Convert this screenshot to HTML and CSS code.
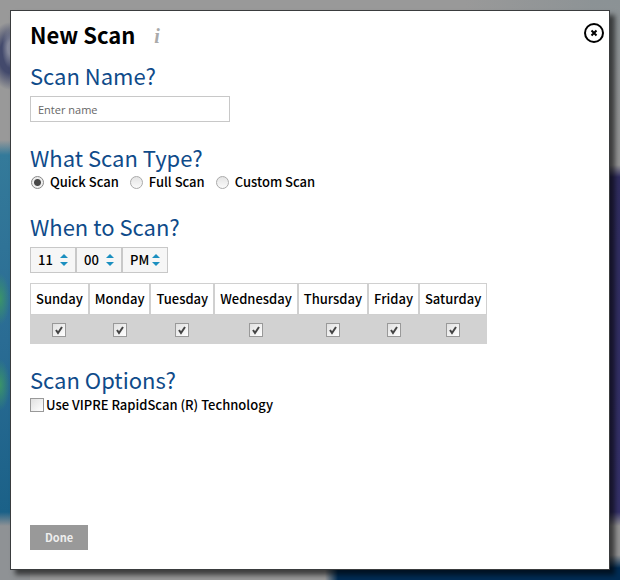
FILE: index.html
```html
<!DOCTYPE html>
<html lang="en">
<head>
<meta charset="utf-8">
<meta name="viewport" content="width=device-width, initial-scale=1">
<title>New Scan</title>
<link rel="stylesheet" href="styles.css">
</head>
<body>
<main class="backdrop">
  <form class="dialog" role="dialog" aria-labelledby="dialog-title">
    <header class="dialog-header">
      <h1 id="dialog-title">New Scan</h1>
      <span class="info">i</span>
      <button class="close" type="button" aria-label="Close">
        <svg width="20" height="20" viewBox="0 0 20 20" fill="none" stroke="#000"><circle cx="10" cy="10" r="9" stroke-width="2"/><path d="M7.500 7.500l5 5M12.500 7.500l-5 5" stroke-width="2"/></svg>
      </button>
    </header>

    <section class="name-section">
      <h2><label for="scan-name">Scan Name?</label></h2>
      <input class="name-input" id="scan-name" type="text" placeholder="Enter name">
    </section>

    <section class="type-section">
      <h2>What Scan Type?</h2>
      <div class="radios">
        <label><input type="radio" name="type" checked>Quick Scan</label>
        <label><input type="radio" name="type">Full Scan</label>
        <label><input type="radio" name="type">Custom Scan</label>
      </div>
    </section>

    <section class="time-section">
      <h2>When to Scan?</h2>
      <div class="time">
        <label class="picker"><select aria-label="Hour"><option>11</option></select><svg class="arrows" width="8" height="12" viewBox="0 0 8 12" fill="#1b8fc0"><path d="M4 0l4 4H0zM0 8h8l-4 4z"/></svg></label>
        <label class="picker"><select aria-label="Minute"><option>00</option></select><svg class="arrows" width="8" height="12" viewBox="0 0 8 12" fill="#1b8fc0"><path d="M4 0l4 4H0zM0 8h8l-4 4z"/></svg></label>
        <label class="picker"><select aria-label="AM or PM"><option>PM</option></select><svg class="arrows" width="8" height="12" viewBox="0 0 8 12" fill="#1b8fc0"><path d="M4 0l4 4H0zM0 8h8l-4 4z"/></svg></label>
      </div>
      <table class="days">
        <thead>
          <tr><th id="sun">Sunday</th><th id="mon">Monday</th><th id="tue">Tuesday</th><th id="wed">Wednesday</th><th id="thu">Thursday</th><th id="fri">Friday</th><th id="sat">Saturday</th></tr>
        </thead>
        <tbody>
          <tr>
            <td><label class="tick"><input type="checkbox" aria-labelledby="sun" checked><svg viewBox="0 0 14 14"><path d="M4 7l2 3 4-6"/></svg></label></td>
            <td><label class="tick"><input type="checkbox" aria-labelledby="mon" checked><svg viewBox="0 0 14 14"><path d="M4 7l2 3 4-6"/></svg></label></td>
            <td><label class="tick"><input type="checkbox" aria-labelledby="tue" checked><svg viewBox="0 0 14 14"><path d="M4 7l2 3 4-6"/></svg></label></td>
            <td><label class="tick"><input type="checkbox" aria-labelledby="wed" checked><svg viewBox="0 0 14 14"><path d="M4 7l2 3 4-6"/></svg></label></td>
            <td><label class="tick"><input type="checkbox" aria-labelledby="thu" checked><svg viewBox="0 0 14 14"><path d="M4 7l2 3 4-6"/></svg></label></td>
            <td><label class="tick"><input type="checkbox" aria-labelledby="fri" checked><svg viewBox="0 0 14 14"><path d="M4 7l2 3 4-6"/></svg></label></td>
            <td><label class="tick"><input type="checkbox" aria-labelledby="sat" checked><svg viewBox="0 0 14 14"><path d="M4 7l2 3 4-6"/></svg></label></td>
          </tr>
        </tbody>
      </table>
    </section>

    <section class="options-section">
      <h2>Scan Options?</h2>
      <div class="option">
        <span class="tick"><input type="checkbox" id="rapid"><svg viewBox="0 0 14 14"><path d="M4 7l2 3 4-6"/></svg></span>
        <label for="rapid">Use VIPRE RapidScan (R) Technology</label>
      </div>
    </section>

    <footer class="dialog-footer">
      <button class="done" type="submit" disabled>Done</button>
    </footer>
  </form>
</main>
</body>
</html>
```
FILE: styles.css
```css
* { box-sizing: border-box; }

body {
  margin: 0;
  font: 500 13px/18px "Noto Sans CJK SC", "Open Sans", sans-serif;
  color: #000;
}

.backdrop {
  display: flex;
  min-height: 100vh;
  padding: 10px;
  background:
    radial-gradient(ellipse 8px 20px at 10px 48px, #84889a 30%, transparent),
    radial-gradient(ellipse 22px 34px at 10px 56px, #434a6c 50%, transparent),
    radial-gradient(ellipse 10px 26px at 0 299px, #3b9468, transparent),
    radial-gradient(ellipse 10px 26px at 0 385px, #3b9468, transparent),
    linear-gradient(90deg, transparent 325px, #002c54 338px) bottom / 100% 12px no-repeat,
    linear-gradient(#999 140px, #347a9a 155px, #2a6c94 340px, #1b6188 512px, #8f9295 526px) left / 30px 100% no-repeat,
    linear-gradient(#8b9295 0, #969696 165px, #302d60 177px, #35316a 512px, #969696 526px 555px, #002c54 568px) right / 30px 100% no-repeat,
    linear-gradient(90deg, #999 75%, #8b9295);
}

.dialog {
  display: flex;
  flex: 1;
  flex-direction: column;
  padding: 12px 5px 19px 19px;
  border: 1px solid #3a3c3e;
  background: #fff;
  box-shadow: 5px 5px 5px rgba(0, 0, 0, .6);
}

.dialog-header {
  display: flex;
  height: 40px;
}

h1 {
  margin: 0;
  font-size: 22px;
  line-height: 22px;
  font-weight: 700;
}

.info {
  margin-left: 19px;
  font: italic 700 20px/26px "Liberation Serif", serif;
  color: #aaa;
}

.close {
  width: 20px;
  height: 20px;
  margin-left: auto;
  padding: 0;
  border: 0;
  background: none;
}

.close svg { display: block; }

h2 {
  margin: 0;
  font-size: 22px;
  line-height: 24px;
  font-weight: 400;
  color: #0f4b8a;
}

.name-section { margin-bottom: 23px; }

.name-input {
  display: block;
  width: 200px;
  height: 26px;
  margin-top: 9px;
  padding: 0 7px;
  border: 1px solid #c8c8c8;
  font: 400 11px/20px "Open Sans", sans-serif;
}

.name-input::placeholder { color: #666; }

.type-section { margin-bottom: 23px; }

.radios { display: flex; gap: 10px; margin-top: 4px; }

.radios label { display: flex; align-items: center; gap: 6px; }

.radios input {
  appearance: none;
  width: 13px;
  height: 13px;
  margin: 0 0 0 1px;
  border: 1px solid #aaa;
  border-radius: 50%;
  background: linear-gradient(#e4e4e4, #fafafa);
}

.radios input:checked {
  border-color: #888;
  background: radial-gradient(circle, #484848 3px, #eee 4px);
}

.time { display: flex; margin: 9px 0 10px; }

.picker { position: relative; }

.picker select {
  appearance: none;
  display: block;
  width: 46px;
  height: 26px;
  padding: 0 7px;
  border: 1px solid #c8c8c8;
  border-radius: 0;
  background: #f6f6f6;
  font: inherit;
  color: #000;
}

.arrows {
  position: absolute;
  top: 7px;
  right: 8px;
  pointer-events: none;
}

.days { border-collapse: separate; border-spacing: 0; }

.days th {
  height: 32px;
  padding: 0 5px;
  border: 1px solid #d0d0d0;
  font-weight: 500;
}

.days td {
  height: 29px;
  padding: 0;
  background: #d2d2d2;
}

.tick {
  display: grid;
  width: 14px;
  height: 14px;
}

.days .tick { margin: 0 auto; }

.tick input, .tick svg { grid-area: 1 / 1; }

.tick input {
  appearance: none;
  width: 14px;
  height: 14px;
  margin: 0;
  border: 1px solid #999;
  background: linear-gradient(135deg, #e0e0e0, #fff);
}

.tick svg {
  z-index: 1;
  fill: none;
  stroke: #444;
  stroke-width: 2;
  visibility: hidden;
  pointer-events: none;
}

.tick input:checked + svg { visibility: visible; }

.options-section { margin-top: 23px; }

.option { display: flex; align-items: center; gap: 2px; margin-top: 5px; }

.dialog-footer { margin-top: auto; }

.done {
  display: block;
  padding: 0 15px;
  border: 0;
  background: #999;
  font: 700 11px/25px "Noto Sans CJK SC", sans-serif;
  color: #eee;
}
```
